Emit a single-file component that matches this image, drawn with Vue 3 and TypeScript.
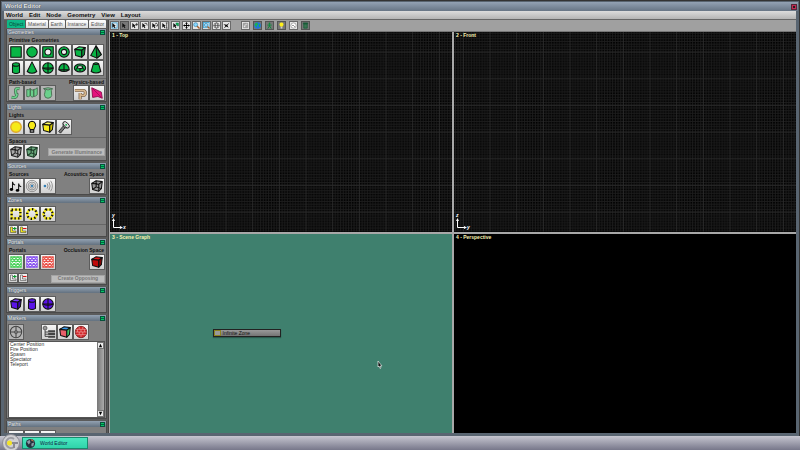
<script setup lang="ts">
import { ref } from 'vue'

interface Tool { icon: string; label: string; dim?: boolean; pressed?: boolean }
interface Group { tools: Tool[]; small?: boolean }

const G = '#08b545'
const Y = '#f6ea18'
const V = '#5a12e8'
const S = 'stroke="#111" stroke-width="1.2" stroke-linejoin="round"'

const cube = (top: string, left: string, right: string, stroke = '#111') =>
  `<g stroke="${stroke}" stroke-width="1.2" stroke-linejoin="round"><path fill="${top}" d="M2 5 7 2 14 3 10 6z"/><path fill="${left}" d="M2 5 10 6 10 14 3 12z"/><path fill="${right}" d="M10 6 14 3 13 11 10 14z"/></g>`
const wireCube = (fill: string, line: string) =>
  `<g fill="none" stroke="${line}" stroke-width="1.2" stroke-linejoin="round"><path fill="${fill}" d="M2 5 7 2 14 3 13 11 10 14 3 12z"/><path d="M2 5 10 6 14 3M10 6V14M7 2V9L3 12M7 9 13 11"/></g>`
const cylinder = (fill: string) =>
  `<path fill="${fill}" ${S} d="M4 4V13Q8 15.500 12 13V4"/><ellipse cx="8" cy="4" rx="4" ry="2" fill="${fill}" ${S}/>`
const sphere = (fill: string) =>
  `<circle cx="8" cy="8" r="6" fill="${fill}" ${S}/><path d="M2 8H14M8 2V14" ${S}/><path d="M2 8Q8 11 14 8" fill="none" ${S}/>`
const lattice = (color: string) =>
  `<rect x="2" y="2" width="12" height="12" fill="#fff" stroke="${color}" stroke-width="1"/><path stroke="${color}" stroke-width="1.300" fill="none" d="M2 6 6 2M2 10 10 2M2 14 14 2M6 14 14 6M10 14 14 10M10 2 14 6M6 2 14 10M2 2 14 14M2 6 10 14M2 10 6 14"/>`
const hazard = (shape: string) =>
  `<g fill="none"><g stroke="${Y}" stroke-width="2.600">${shape}</g><g stroke="#111" stroke-width="2.600" stroke-dasharray="1.600 2.600">${shape}</g></g>`
const cornerMark = (color: string, body: string, plus: boolean) =>
  `<path d="M3 2V13H14V10H7V2z" fill="${body}" stroke="#333"/><path d="M8 5H15${plus ? 'M11.500 2V8' : ''}" stroke="${color}" stroke-width="2.200"/>`
const arrow = '<path fill="#111" d="M3 2V13L6 10 8 14 10 13 8 9H11z"/>'

const icons: Record<string, string> = {
  box: `<rect x="2" y="2" width="12" height="12" fill="${G}" ${S}/>`,
  disc: `<circle cx="8" cy="8" r="6" fill="${G}" ${S}/>`,
  boxHole: `<rect x="2" y="2" width="12" height="12" fill="${G}" ${S}/><circle cx="8" cy="8" r="3.500" fill="#eee" ${S}/>`,
  ring: `<circle cx="8" cy="8" r="6" fill="${G}" ${S}/><circle cx="8" cy="8" r="3" fill="#eee" ${S}/>`,
  cube: cube('#2be06a', G, '#078d36'),
  pyramid: `<path fill="${G}" ${S} d="M8 1 2 12 9 15 14 11z"/><path fill="#078d36" ${S} d="M8 1 9 15 14 11z"/>`,
  cylinder: cylinder(G),
  cone: `<path fill="${G}" ${S} d="M8 1 2.500 12Q8 16 13.500 12z"/>`,
  sphere: sphere(G),
  dome: `<path fill="${G}" ${S} d="M2 10Q3 3 8 3T14 10Q8 14 2 10zM2 10H14M8 3V12"/>`,
  torus: `<ellipse cx="8" cy="8" rx="6.500" ry="4.500" fill="${G}" ${S}/><ellipse cx="8" cy="7" rx="3" ry="1.500" fill="#eee" ${S}/><path d="M3 10 5 8M13 10 11 8M8 9V12" ${S}/>`,
  frustum: `<path fill="${G}" ${S} d="M5 3 2.500 12Q8 15.500 13.500 12L11 3Q8 1 5 3Q8 5 11 3"/>`,
  curve: `<path d="M12 3Q7 2 7.500 6T9 10Q9 14 3 13" fill="none" stroke="#456b4f" stroke-width="3.600"/><path d="M12 3Q7 2 7.500 6T9 10Q9 14 3 13" fill="none" stroke="#6bd08c" stroke-width="2"/>`,
  ribbon: `<path fill="#6bd08c" stroke="#456b4f" d="M2 4Q4 5 6 3V11Q4 13 2 12zM6 3Q8 6 10 4V12Q8 14 6 11zM10 4Q12 4 14 2V10Q12 12 10 12z"/>`,
  revolve: `<path fill="#6bd08c" stroke="#456b4f" d="M3 3Q8 1 13 3Q11 5 12 8T11 13Q8 15 5 13 3 10 4.500 7T3 3Q8 6 13 3"/>`,
  rope: `<path d="M1 5H10A3 3 0 1 1 7 8V15" fill="none" stroke="#69513a" stroke-width="3.400"/><path d="M1 5H10A3 3 0 1 1 7 8V15" fill="none" stroke="#d5b78e" stroke-width="2"/>`,
  cloth: `<path fill="#e5127d" stroke="#8a0b4a" d="M2 2 13 7 14 14 9 12 3 13z"/><path d="M3 3 13 13" stroke="#a30c58"/>`,
  sun: `<circle cx="8" cy="8" r="6" fill="${Y}" stroke="#e0a92c" stroke-width="1.500"/>`,
  bulb: `<path fill="${Y}" ${S} d="M8 1.500A4.500 4.500 0 0 0 5 9L6 11H10L11 9A4.500 4.500 0 0 0 8 1.500z"/><path fill="#999" ${S} d="M6 11H10V14H6z"/>`,
  lightBox: cube('#fffb60', Y, '#cfc100'),
  torch: `<path fill="#777" stroke="#222" d="M2 13 7 7 9 9 4 15z"/><path fill="#bbb" stroke="#222" d="M7 7 7 4 12 9 9 9z"/><ellipse cx="10.500" cy="5.500" rx="4.500" ry="2.500" transform="rotate(45 10.500 5.500)" fill="#ddd" stroke="#222"/><circle cx="10.500" cy="5.500" r="1" fill="${G}"/>`,
  ambient: wireCube('#aaa', '#222'),
  fog: wireCube('#6aa97c', '#1d3a26'),
  notes: `<path d="M4 12V3M11 13V5M4 3Q4 6 7 7M11 5Q11 8 14 9" fill="none" stroke="#111" stroke-width="1.200"/><ellipse cx="2.800" cy="12" rx="2" ry="1.600"/><ellipse cx="9.700" cy="13" rx="2" ry="1.600"/>`,
  waves: `<g fill="none" stroke="#888"><circle cx="8" cy="8" r="6.500"/><circle cx="8" cy="8" r="4.500"/><circle cx="8" cy="8" r="2.500"/></g><circle cx="8" cy="8" r="1.300" fill="#337fb5"/>`,
  speaker: `<g fill="none" stroke="#888"><path d="M7 5Q9 8 7 11M9 3.500Q12 8 9 12.500M11 2Q15 8 11 14"/></g><circle cx="4.500" cy="8" r="1.500" fill="#337fb5"/>`,
  acoustic: wireCube('#999', '#111'),
  zoneBox: hazard('<rect x="3" y="3" width="10" height="10"/>'),
  zoneDisc: hazard('<circle cx="8" cy="8" r="5.500"/>'),
  zonePoly: hazard('<path d="M5.500 3H11L14 8 10.500 13H5L2.500 8z"/>'),
  zoneAdd: cornerMark('#0a9a2d', Y, true),
  zoneSub: cornerMark('#d11', Y, false),
  portalG: lattice('#4ed15d'),
  portalV: lattice('#8a55ef'),
  portalR: lattice('#ea5148'),
  occluder: cube('#e01515', '#c00a0a', '#850505'),
  portalAdd: cornerMark('#0a9a2d', '#eee', true),
  portalSub: cornerMark('#d11', '#eee', false),
  trigBox: cube('#7a3bff', V, '#3b08a8'),
  trigCyl: cylinder(V),
  trigSphere: sphere(V),
  locator: `<g fill="none" stroke="#444" stroke-width="1.200"><circle cx="8" cy="8" r="6.500"/><path d="M8 1.500V6.500M8 9.500V14.500M1.500 8H6.500M9.500 8H14.500"/><circle cx="8" cy="8" r="1.500"/></g>`,
  tree: `<circle cx="3.500" cy="3.500" r="2.200" fill="#999" stroke="#555"/><path d="M3.500 6V13H7M3.500 8H7M3.500 10.500H7" fill="none" stroke="#333"/><path fill="#444" d="M7 6H15V8.500H7zM7 9.200H15V11.500H7zM7 12.200H15V14.500H7z"/>`,
  colorCube: cube('#3a9be8', '#e8606a', '#3fc063'),
  brick: `<circle cx="8" cy="8" r="6.500" fill="#d4262b" stroke="#7a1a1a"/><path d="M2.500 5H13.500M1.500 8H14.500M2.500 11H13.500M6 2V5M10 2V5M4 5V8M8 5V8M12 5V8M6 8V11M10 8V11M8 11V14" stroke="#f2b9b5" stroke-width=".6"/>`,
  path: '<path d="M2 8Q6 2 9 8T14 8" fill="none" stroke="#333" stroke-width="2"/>',
  marquee: `<rect x="2" y="2" width="12" height="12" fill="none" stroke="#43a5d6" stroke-width="2"/>${arrow}`,
  select: arrow,
  move: `${arrow}<path d="M13 2V9M9.500 5.500H16" stroke="#111" stroke-width="1.500"/>`,
  rotate: `${arrow}<path d="M8 3Q15 1 14 8" fill="none" stroke="#111" stroke-width="1.500"/>`,
  scale: `${arrow}<path d="M9 6 12 2 15 6V9H11" fill="none" stroke="#111" stroke-width="1.500"/>`,
  slide: `${arrow}<path d="M13 2V14M11 2H15M11 14H15" stroke="#111" stroke-width="1.500"/>`,
  connect: `${arrow}<path d="M9 2H15V9H12V6H9z" fill="${G}" stroke="#165"/>`,
  pan: '<path d="M8 0 11 4H9V7H12V5L16 8 12 11V9H9V12H11L8 16 5 12H7V9H4V11L0 8 4 5V7H7V4H5z"/>',
  zoom: '<path d="M9 9 15 15" stroke="#a45a26" stroke-width="3"/><circle cx="6" cy="6" r="4.500" fill="#8bd8ff" stroke="#3785ad" stroke-width="1.500"/>',
  zoomBox: '<rect x="1" y="1" width="13" height="12" fill="none" stroke="#43a5d6" stroke-width="2"/><path d="M10 10 15 15" stroke="#a45a26" stroke-width="3"/><circle cx="7" cy="7" r="4" fill="#8bd8ff" stroke="#3785ad" stroke-width="1.500"/>',
  orbit: '<g fill="none" stroke="#333" stroke-width="1.300"><circle cx="8" cy="8" r="6"/><ellipse cx="8" cy="8" rx="2.500" ry="6"/><path d="M1 8H15"/></g>',
  fly: '<path d="M15 1 10 8 13 13 8 10 1 15 6 9 1 5 9 6z"/>',
  snap: '<path d="M3 3H13V13H3zM3 7 8 3M5 7H11V11H7" fill="none" stroke="#777" stroke-width="1.500"/>',
  globe: '<circle cx="8" cy="8" r="7.500" fill="#1c72e8"/><path fill="#1eb04c" d="M3 3 8 1 9 6 6 8 7 13 4 10 1 7zM11 5 14 5 14 10 11 12z"/>',
  person: '<circle cx="8" cy="3" r="2" fill="#0b8a3c"/><path d="M3 7H13M8 5V10M8 9 4 15M8 9 12 15" stroke="#0b8a3c" stroke-width="2.200"/>',
  lamp: '<path fill="#fff01c" d="M8 1A4.500 4.500 0 0 0 5 9L6 11H10L11 9A4.500 4.500 0 0 0 8 1z"/><path fill="#ccc" d="M6 11H10V15H6z"/>',
  clock: '<circle cx="8" cy="8" r="6" fill="#fff" stroke="#888" stroke-width="1.500"/><path d="M8 8 11 11M8 8H5" stroke="#444" stroke-width="1.500"/>',
  bin: '<path fill="#3a7551" stroke="#153" stroke-width="1.500" d="M4 4H12V14H4zM3 2H13V4H3z"/>',
}

const t = (icon: string, label: string, extra: Partial<Tool> = {}): Tool => ({ icon, label, ...extra })

const menus = ['World', 'Edit', 'Node', 'Geometry', 'View', 'Layout']
const tabs = ['Object', 'Material', 'Earth', 'Instance', 'Editor']
const activeTab = ref('Object')

const toolbar: Tool[][] = [
  [t('marquee', 'Box select'), t('select', 'Select', { pressed: true }), t('move', 'Move'), t('rotate', 'Rotate'), t('scale', 'Scale'), t('slide', 'Slide')],
  [t('connect', 'Connect')],
  [t('pan', 'Pan'), t('zoom', 'Zoom'), t('zoomBox', 'Zoom box'), t('orbit', 'Orbit'), t('fly', 'Fly')],
]
const toggles: Tool[] = [
  t('snap', 'Snap'), t('globe', 'World', { pressed: true }), t('person', 'Figure', { pressed: true }),
  t('lamp', 'Lighting', { pressed: true }), t('clock', 'Time'), t('bin', 'Delete', { pressed: true }),
]

const primitives: Tool[] = [
  t('box', 'Plate'), t('disc', 'Disk'), t('boxHole', 'Plate with hole'), t('ring', 'Ring'), t('cube', 'Box'), t('pyramid', 'Pyramid'),
  t('cylinder', 'Cylinder'), t('cone', 'Cone'), t('sphere', 'Sphere'), t('dome', 'Dome'), t('torus', 'Torus'), t('frustum', 'Frustum'),
]
const pathBased = [t('curve', 'Extrusion', { dim: true }), t('ribbon', 'Ribbon', { dim: true }), t('revolve', 'Revolution', { dim: true })]
const physics = [t('rope', 'Rope'), t('cloth', 'Cloth')]
const lights = [t('sun', 'Infinite'), t('bulb', 'Point'), t('lightBox', 'Box light'), t('torch', 'Spot')]
const spaces = [t('ambient', 'Ambient space'), t('fog', 'Fog space')]
const sources = [t('notes', 'Music'), t('waves', 'Omni'), t('speaker', 'Directed')]
const zones = [t('zoneBox', 'Box zone'), t('zoneDisc', 'Cylinder zone'), t('zonePoly', 'Polygon zone')]
const zoneEdit = [t('zoneAdd', 'Add vertex'), t('zoneSub', 'Remove vertex')]
const portals = [t('portalG', 'Direct portal'), t('portalV', 'Remote portal'), t('portalR', 'Occlusion portal')]
const portalEdit = [t('portalAdd', 'Add portal vertex'), t('portalSub', 'Remove portal vertex')]
const triggers = [t('trigBox', 'Box trigger'), t('trigCyl', 'Cylinder trigger'), t('trigSphere', 'Sphere trigger')]
const markers = [t('tree', 'Reference'), t('colorCube', 'Cube map'), t('brick', 'Impostor')]
const paths = [t('path', 'Linear'), t('path', 'Arc'), t('path', 'Bezier')]

const panels: { title: string; rows: { heads?: string[]; left?: Group; right?: Group; action?: string; list?: boolean; line?: boolean }[] }[] = [
  { title: 'Geometries', rows: [
    { heads: ['Primitive Geometries'], left: { tools: primitives } },
    { heads: ['Path-based', 'Physics-based'], left: { tools: pathBased }, right: { tools: physics }, line: true },
  ] },
  { title: 'Lights', rows: [
    { heads: ['Lights'], left: { tools: lights } },
    { heads: ['Spaces'], left: { tools: spaces }, action: 'Generate Illuminance', line: true },
  ] },
  { title: 'Sources', rows: [
    { heads: ['Sources', 'Acoustics Space'], left: { tools: sources }, right: { tools: [t('acoustic', 'Acoustics space')] } },
  ] },
  { title: 'Zones', rows: [
    { left: { tools: zones } },
    { left: { tools: zoneEdit, small: true }, line: true },
  ] },
  { title: 'Portals', rows: [
    { heads: ['Portals', 'Occlusion Space'], left: { tools: portals }, right: { tools: [t('occluder', 'Occlusion space')] } },
    { left: { tools: portalEdit, small: true }, action: 'Create Opposing' },
  ] },
  { title: 'Triggers', rows: [{ left: { tools: triggers } }] },
  { title: 'Markers', rows: [
    { left: { tools: [t('locator', 'Locator', { dim: true })] }, right: { tools: markers }, list: true },
  ] },
  { title: 'Paths', rows: [{ left: { tools: paths } }] },
]
const locators = ['Center Position', 'Fire Position', 'Spawn', 'Spectator', 'Teleport']

const views = [
  { name: '1 - Top', kind: 'grid', axes: ['y', 'x'] },
  { name: '2 - Front', kind: 'grid', axes: ['z', 'y'] },
  { name: '3 - Scene Graph', kind: 'graph' },
  { name: '4 - Perspective', kind: 'solid' },
]
</script>

<template>
  <div class="desktop">
    <main class="window">
      <header class="titlebar">
        <h1>World Editor</h1>
        <button class="close" aria-label="Close"></button>
      </header>
      <nav class="menubar">
        <button v-for="m in menus" :key="m">{{ m }}</button>
      </nav>
      <div class="body">
        <aside class="sidebar">
          <div class="tabs">
            <button v-for="tab in tabs" :key="tab" :class="{ active: tab === activeTab }" @click="activeTab = tab">{{ tab }}</button>
          </div>
          <section v-for="p in panels" :key="p.title" class="panel">
            <header class="panel-head"><h2>{{ p.title }}</h2><button class="fold" :aria-label="'Collapse ' + p.title"></button></header>
            <div v-for="(row, i) in p.rows" :key="i" class="block" :class="{ line: row.line, bare: !row.heads }">
              <div v-if="row.heads" class="heads"><h3 v-for="h in row.heads" :key="h">{{ h }}</h3></div>
              <div class="row" :class="{ markers: row.list }">
                <div v-if="row.left" class="tools" :class="{ small: row.left.small }">
                  <button v-for="(tool, k) in row.left.tools" :key="k" :class="{ dim: tool.dim }" :aria-label="tool.label">
                    <svg viewBox="0 0 16 16" v-html="icons[tool.icon]"></svg>
                  </button>
                </div>
                <div v-if="row.right" class="tools">
                  <button v-for="(tool, k) in row.right.tools" :key="k" :aria-label="tool.label">
                    <svg viewBox="0 0 16 16" v-html="icons[tool.icon]"></svg>
                  </button>
                </div>
                <button v-if="row.action" class="action" disabled>{{ row.action }}</button>
              </div>
              <div v-if="row.list" class="list">
                <ul><li v-for="l in locators" :key="l">{{ l }}</li></ul>
                <div class="scroll">
                  <button aria-label="Scroll up"><svg viewBox="0 0 6 6"><path d="M3 1 5 5H1z" /></svg></button>
                  <button aria-label="Scroll down"><svg viewBox="0 0 6 6"><path d="M3 5 5 1H1z" /></svg></button>
                </div>
              </div>
            </div>
          </section>
        </aside>
        <div class="work">
          <div class="toolbar">
            <div v-for="(g, i) in toolbar" :key="i" class="set">
              <button v-for="tool in g" :key="tool.icon" :class="{ pressed: tool.pressed }" :aria-label="tool.label">
                <svg viewBox="0 0 16 16" v-html="icons[tool.icon]"></svg>
              </button>
            </div>
            <div class="set toggles">
              <button v-for="tool in toggles" :key="tool.icon" :class="{ pressed: tool.pressed }" :aria-label="tool.label">
                <svg viewBox="0 0 16 16" v-html="icons[tool.icon]"></svg>
              </button>
            </div>
          </div>
          <div class="views">
            <section v-for="(v, n) in views" :key="v.name" class="view" :class="v.kind">
              <svg v-if="v.kind === 'grid'" class="mesh" aria-hidden="true">
                <defs>
                  <pattern :id="'mesh' + n" width="80" height="80" patternUnits="userSpaceOnUse" patternTransform="scale(0.33333)">
                    <path d="M4 0V80M12 0V80M20 0V80M28 0V80M36 0V80M44 0V80M52 0V80M60 0V80M68 0V80M76 0V80M0 4H80M0 12H80M0 20H80M0 28H80M0 36H80M0 44H80M0 52H80M0 60H80M0 68H80M0 76H80" stroke="#1d1d1d" stroke-width="3" />
                    <path d="M28 0V80M0 60H80" stroke="#2a2a2a" stroke-width="3" />
                  </pattern>
                </defs>
                <rect width="100%" height="100%" :fill="'url(#mesh' + n + ')'" />
              </svg>
              <h2>{{ v.name }}</h2>
              <svg v-if="v.axes" class="axes" viewBox="0 0 16 16">
                <path d="M2.500 6V13.500H10" fill="none" stroke="#fff" />
                <path d="M2.500 4 4 7H1zM12 13.500 9 12V15z" fill="#fff" />
                <text x="1" y="3">{{ v.axes[0] }}</text><text x="12" y="15">{{ v.axes[1] }}</text>
              </svg>
              <template v-if="v.kind === 'graph'">
                <div class="node"><i></i>Infinite Zone</div>
                <svg class="pointer" viewBox="0 0 6 8"><path d="M1 0V6L2 5 3 7.500 4 7 3 5H5z" fill="#111" stroke="#fff" stroke-width=".6" /></svg>
              </template>
            </section>
          </div>
        </div>
      </div>
    </main>
    <footer class="taskbar">
      <button class="start" aria-label="Start">
        <svg viewBox="0 0 18 18">
          <circle cx="9" cy="9" r="8.500" fill="#cfcfd2" stroke="#8c8c94" />
          <path d="M12 5A5 5 0 1 0 12 13" fill="none" stroke="#9b9ba2" stroke-width="2" />
          <path d="M8 9H16M12 9V14" stroke="#8b8b92" stroke-width="2" />
          <circle cx="7.500" cy="9" r="2.500" fill="#f3e326" />
        </svg>
      </button>
      <button class="task">
        <svg viewBox="0 0 12 12"><circle cx="6" cy="6" r="5" fill="#26333f" /><path d="M2 4 5 2 6 5 4 7zM7 6 10 5 9 9 7 9z" fill="#8b9aa8" /><path d="M6 1Q9 1 10 4L7 3z" fill="#b8734f" /></svg>
        World Editor
      </button>
    </footer>
  </div>
</template>

<style>
body { margin: 0; background: #333; }
</style>

<style scoped>
.desktop { display: flex; flex-direction: column; height: 100vh; overflow: hidden; font-family: "Liberation Sans", Arial, sans-serif; font-size: 5px; line-height: 5px; color: #111; }
.desktop * { box-sizing: border-box; }
h1, h2, h3, ul { margin: 0; padding: 0; font-size: inherit; }
button { display: flex; align-items: center; justify-content: center; margin: 0; padding: 0; border: 0; font: inherit; color: inherit; background: none; white-space: nowrap; }
svg { display: block; }

.window { flex: 1; min-height: 0; display: flex; flex-direction: column; padding: 1px 3px 3px; border: 1px solid #333; border-bottom: 0; background: #596571; }
.titlebar { display: flex; align-items: center; justify-content: space-between; height: 9px; flex: none; background: linear-gradient(#93a2b4, #677585); margin: 0 -2px; padding: 0 1px 0 3px; color: #e8ecf0; font-size: 6px; text-shadow: 0 0 1px #222; }
.close { width: 6px; height: 6px; background: #222; border: 2px solid #c02b54; outline: 1px solid #5a2438; outline-offset: -1px; }
.menubar { display: flex; flex: none; gap: 6px; height: 8px; padding-left: 2px; background: linear-gradient(#dcdcdc, #b4b4b4); font-size: 6px; font-weight: bold; }
.body { flex: 1; min-height: 0; display: grid; grid-template-columns: 105px minmax(0, 1fr); border-top: 1px solid #666; background: #999; }

.sidebar { display: flex; flex-direction: column; gap: 2px; overflow: hidden; padding: 0 1px 0 2px; background: #5b5b5b; border-right: 1px solid #444; }
.tabs { display: flex; gap: 1px; height: 8px; flex: none; padding: 0 1px; margin-bottom: -1px; }
.tabs button { flex: 1 1 auto; background: linear-gradient(#fff, #dedede); color: #555; border-radius: 1px 1px 0 0; }
.tabs .active { background: #0fb888; color: #064a37; }
.panel { flex: none; background: #808080; border: 1px solid #4a4a4a; border-top: 0; }
.panel-head { display: flex; align-items: center; justify-content: space-between; height: 6px; padding: 0 1px; background: linear-gradient(#93a2b2, #63717f); color: #eef2f5; text-shadow: 0 0 1px #333; }
.panel-head h2 { font-weight: normal; }
.fold { width: 5px; height: 5px; background: linear-gradient(#06c665 1px, #064 1px, #064 2px, #06c665 2px); border: 1px solid #07503a; }
.block { padding: 2px 1px 0; }
.bare { padding-top: 3px; }
.line { margin-top: 2px; padding-top: 0; border-top: 1px solid #666; }
.heads { display: flex; justify-content: space-between; padding: 0 1px; height: 7px; align-items: center; }
.line .heads { height: 6px; }
.row { display: flex; align-items: center; justify-content: space-between; }
.tools { display: flex; flex-wrap: wrap; }
.tools button { width: 16px; height: 16px; background: linear-gradient(#f6f6f6, #d0d0d0); border: 1px solid #5c5c5c; }
.tools svg { width: 14px; height: 14px; }
.tools .dim { background: #b4b4b4; }
.small { padding-bottom: 1px; }
.small button { width: 10px; height: 10px; }
.small svg { width: 8px; height: 8px; }
.action { height: 8px; padding: 0 2px; min-width: 54px; background: #bcbcbc; border: 1px solid #a4a4a4; color: #777; font-weight: bold; }
.markers { padding-right: 16px; }
.list { display: flex; height: 77px; margin-top: 1px; background: #fff; border: 1px solid #555; }
.list ul { flex: 1; list-style: none; padding-left: 1px; color: #333; }
.scroll { display: flex; flex-direction: column; justify-content: space-between; width: 7px; background: linear-gradient(90deg, #777, #aaa); }
.scroll button { height: 7px; background: #eee; border: 1px solid #777; }
.scroll svg { width: 5px; height: 5px; }

.work { display: flex; flex-direction: column; min-width: 0; }
.toolbar { display: flex; align-items: center; gap: 2px; height: 12px; flex: none; padding: 0 0 1px 1px; background: #a0a0a0; border-bottom: 1px solid #777; }
.set { display: flex; gap: 1px; }
.toggles { gap: 3px; margin-left: 8px; }
.set button { width: 9px; height: 9px; background: #e6e6e6; border: 1px solid #6a6a6a; }
.set .pressed { background: #777; border-color: #555; }
.set svg { width: 7px; height: 7px; }
.views { flex: 1; min-height: 0; display: grid; grid-template: minmax(0, 1fr) minmax(0, 1fr) / minmax(0, 1fr) minmax(0, 1fr); gap: 2px; background: #a8a8a8; padding-left: 1px; }
.view { position: relative; overflow: hidden; background: #000; }
.view h2 { position: relative; padding: 1px 2px; color: #f6f2b0; font-weight: bold; }
.mesh { position: absolute; inset: 0; width: 100%; height: 100%; }
.graph { background: #3f806e; }
.axes { position: absolute; left: 1px; bottom: 2px; width: 16px; height: 16px; overflow: visible; }
.axes text { font-size: 5px; font-style: italic; font-weight: bold; fill: #fff; }
.node { position: absolute; left: 30%; top: 48%; display: flex; align-items: center; gap: 2px; width: 68px; height: 8px; background: linear-gradient(#999, #747474); border: 1px solid #222; box-shadow: 0 1px 1px #2a5a4d; }
.node i { width: 7px; height: 6px; background: #999; border: 1px dashed #e4d41c; outline: 1px solid #8c8420; outline-offset: -1px; }
.pointer { position: absolute; left: 78%; top: 64%; width: 6px; height: 8px; }

.taskbar { display: flex; align-items: center; gap: 2px; height: 14px; flex: none; padding-left: 1px; background: linear-gradient(#c6c6d0, #77778a); }
.start { width: 19px; height: 14px; }
.start svg { width: 18px; height: 18px; flex: none; }
.task { justify-content: flex-start; gap: 4px; width: 66px; height: 12px; padding-left: 2px; background: linear-gradient(#4ae8c0, #2fd4aa); border: 1px solid #1a8a6d; color: #124; }
.task svg { width: 11px; height: 11px; }
</style>
